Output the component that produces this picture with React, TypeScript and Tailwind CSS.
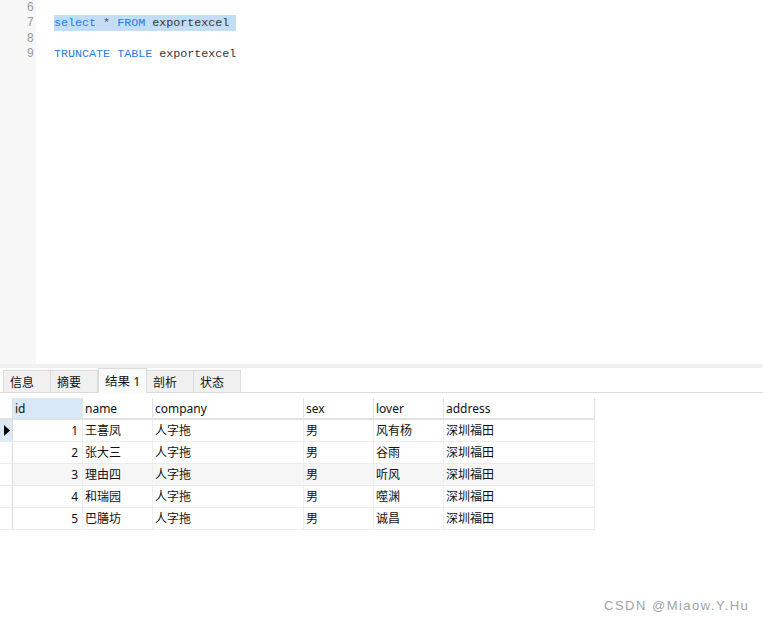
const rows = [
  { id: 1, name: "王喜凤", company: "人字拖", sex: "男", lover: "风有杨", address: "深圳福田" },
  { id: 2, name: "张大三", company: "人字拖", sex: "男", lover: "谷雨", address: "深圳福田" },
  { id: 3, name: "理由四", company: "人字拖", sex: "男", lover: "听风", address: "深圳福田" },
  { id: 4, name: "和瑞园", company: "人字拖", sex: "男", lover: "噬渊", address: "深圳福田" },
  { id: 5, name: "巴膳坊", company: "人字拖", sex: "男", lover: "诚昌", address: "深圳福田" },
];

const tabs = ["信息", "摘要", "结果 1", "剖析", "状态"];

const ui = { fontFamily: '"Noto Sans", "Noto Sans CJK SC", sans-serif' };
const mono = { fontFamily: '"Liberation Mono", monospace' };

export default function App() {
  return (
    <div className="w-[763px] h-[620px] bg-white relative overflow-hidden" style={ui}>
      {/* editor */}
      <div className="flex h-[364px]">
        <div
          className="w-[36px] bg-[#f7f7f7] text-[#9a9a9a] text-[12px] leading-[15.3px] text-right pr-[2px] pt-[1px]"
          style={mono}
        >
          <div>6</div>
          <div>7</div>
          <div>8</div>
          <div>9</div>
        </div>
        <div className="pl-[18px] text-[11.7px] leading-[15.3px] text-[#333] pt-[1px]" style={mono}>
          <div>&nbsp;</div>
          <div>
            <span className="bg-[#c4ddf6] pr-[7px] py-[1px]">
              <span className="text-[#1c7ce8]">select</span> <span className="text-[#555]">*</span>{" "}
              <span className="text-[#1c7ce8]">FROM</span> exportexcel
            </span>
          </div>
          <div>&nbsp;</div>
          <div>
            <span className="text-[#1c7ce8]">TRUNCATE</span> <span className="text-[#1c7ce8]">TABLE</span> exportexcel
          </div>
        </div>
      </div>

      {/* splitter */}
      <div className="h-[4px] bg-[#f0f0f0]" />

      {/* tabs */}
      <div className="h-[25px] flex items-end pl-[3px] border-b border-[#dcdcdc]">
        {tabs.map((t, i) =>
          i === 2 ? (
            <div
              key={t}
              className="w-[49px] h-[25px] -mb-px bg-[#fafafa] border border-b-0 border-[#dcdcdc] text-[12.5px] text-[#111] pl-[6px] leading-[25px]"
            >
              {t}
            </div>
          ) : (
            <div
              key={t}
              className="w-[48px] h-[22px] bg-[#f0f0f0] border-r border-t border-l border-[#dcdcdc] -ml-px first:ml-0 text-[12px] text-[#111] pl-[6px] leading-[23px]"
            >
              {t}
            </div>
          )
        )}
      </div>

      {/* grid */}
      <div className="mt-[5px] w-[595px] text-[12px] text-[#111]">
        <div className="flex h-[22px] border-b-2 border-[#e2e2e2]">
          <div className="w-[13px] border-r border-[#e2e2e2]" />
          <div className="w-[70px] bg-[#d9e9f8] border-r border-[#e2e2e2] pl-[2px] leading-[21px]">id</div>
          <div className="w-[70px] border-r border-[#e2e2e2] pl-[2px] leading-[21px]">name</div>
          <div className="w-[151px] border-r border-[#e2e2e2] pl-[2px] leading-[21px]">company</div>
          <div className="w-[70px] border-r border-[#e2e2e2] pl-[2px] leading-[21px]">sex</div>
          <div className="w-[70px] border-r border-[#e2e2e2] pl-[2px] leading-[21px]">lover</div>
          <div className="w-[151px] border-r border-[#e2e2e2] pl-[2px] leading-[21px]">address</div>
        </div>
        {rows.map((r, i) => (
          <div
            key={r.id}
            className={
              "flex h-[22px] border-b border-[#ececec] leading-[22px] " +
              (i === 2 ? "bg-[#f6f6f6]" : "bg-white")
            }
          >
            <div
              className={
                "w-[13px] border-r border-[#dcdcdc] flex items-center pl-[4px] " +
                (i === 0 ? "bg-[#d9e9f8]" : "bg-white")
              }
            >
              {i === 0 && (
                <svg width="6" height="11" viewBox="0 0 6 11">
                  <path d="M0 0 L6 5.5 L0 11 Z" fill="#000" />
                </svg>
              )}
            </div>
            <div className="w-[70px] border-r border-[#efefef] text-right pr-[4px]">{r.id}</div>
            <div className="w-[70px] border-r border-[#efefef] pl-[2px]">{r.name}</div>
            <div className="w-[151px] border-r border-[#efefef] pl-[2px]">{r.company}</div>
            <div className="w-[70px] border-r border-[#efefef] pl-[2px]">{r.sex}</div>
            <div className="w-[70px] border-r border-[#efefef] pl-[2px]">{r.lover}</div>
            <div className="w-[151px] border-r border-[#efefef] pl-[2px]">{r.address}</div>
          </div>
        ))}
      </div>

      {/* watermark */}
      <div
        className="absolute left-[604px] top-[596px] text-[13px] tracking-[1.5px] text-[#a3a3a3]"
        style={{ fontFamily: '"Liberation Sans", sans-serif' }}
      >
        CSDN @Miaow.Y.Hu
      </div>
    </div>
  );
}
